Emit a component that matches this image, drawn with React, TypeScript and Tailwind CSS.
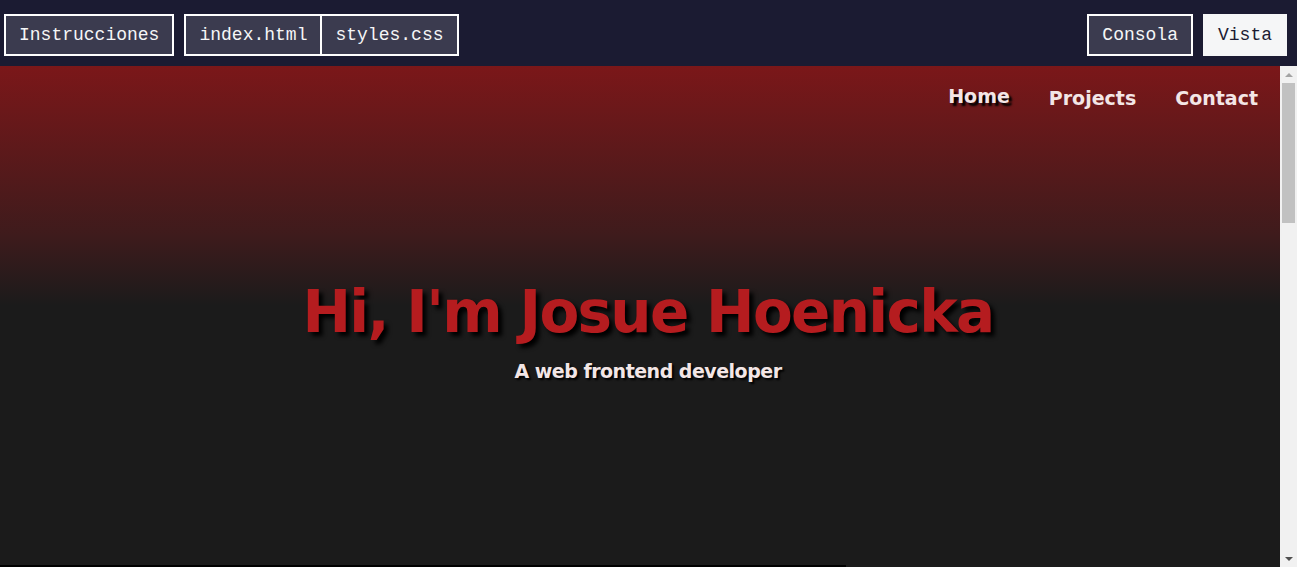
const tabBtn =
  "h-[42px] px-[13px] border-2 border-white bg-[#3b3b4f] text-[#f5f6f7] text-[18px] leading-none flex items-center";

function TopBar() {
  return (
    <header className="h-[66px] bg-[#1b1b32] flex items-start pt-[14px] justify-between px-[4px] font-['Liberation_Mono',monospace]">
      <div className="flex items-center gap-[10px]">
        <button className={tabBtn}>Instrucciones</button>
        <div className="flex">
          <button className={tabBtn}>index.html</button>
          <button className={tabBtn + " -ml-[2px]"}>styles.css</button>
        </div>
      </div>
      <div className="flex items-center gap-[10px] pr-[6px]">
        <button className={tabBtn}>Consola</button>
        <button className="h-[42px] px-[15px] bg-[#f5f6f7] text-[#1b1b32] text-[18px] leading-none flex items-center">
          Vista
        </button>
      </div>
    </header>
  );
}

function Scrollbar() {
  return (
    <div className="w-[17px] bg-[#f1f1f1] flex flex-col items-center">
      <div className="h-[17px] flex items-center justify-center">
        <div className="w-0 h-0 border-l-[4px] border-r-[4px] border-b-[4px] border-l-transparent border-r-transparent border-b-[#a3a3a3]" />
      </div>
      <div className="w-[13px] h-[140px] bg-[#c1c1c1]" />
      <div className="flex-1" />
      <div className="h-[17px] flex items-center justify-center">
        <div className="w-0 h-0 border-l-[4px] border-r-[4px] border-t-[4px] border-l-transparent border-r-transparent border-t-[#505050]" />
      </div>
    </div>
  );
}

export default function App() {
  return (
    <div className="w-[1297px] h-[567px] overflow-hidden flex flex-col">
      <TopBar />
      <div className="flex-1 flex">
        <main className="flex-1 flex flex-col bg-[linear-gradient(to_bottom,#7b1719_0px,#3e1b1c_170px,#1b1b1b_240px)] font-['DejaVu_Sans',sans-serif] font-bold">
          <nav className="flex justify-end items-start gap-[39px] pr-[22px] pt-[18px] text-[19px] text-[#f3e6e6]">
            <a className="-mt-[2px] [text-shadow:3px_3px_2px_#000]">Home</a>
            <a>Projects</a>
            <a>Contact</a>
          </nav>
          <section className="flex flex-col items-center mt-[170px] pl-[16px]">
            <h1 className="text-[58px] leading-none text-[#b51c1f] tracking-[-1.7px] [text-shadow:4px_4px_4px_#000]">
              Hi, I'm Josue Hoenicka
            </h1>
            <p className="mt-[16px] text-[19px] text-[#f3e6e6] tracking-[-0.5px] [text-shadow:2px_2px_2px_#000]">
              A web frontend developer
            </p>
          </section>
          <div className="flex-1" />
          <div className="h-[2px] w-[846px] bg-black" />
        </main>
        <Scrollbar />
      </div>
    </div>
  );
}
